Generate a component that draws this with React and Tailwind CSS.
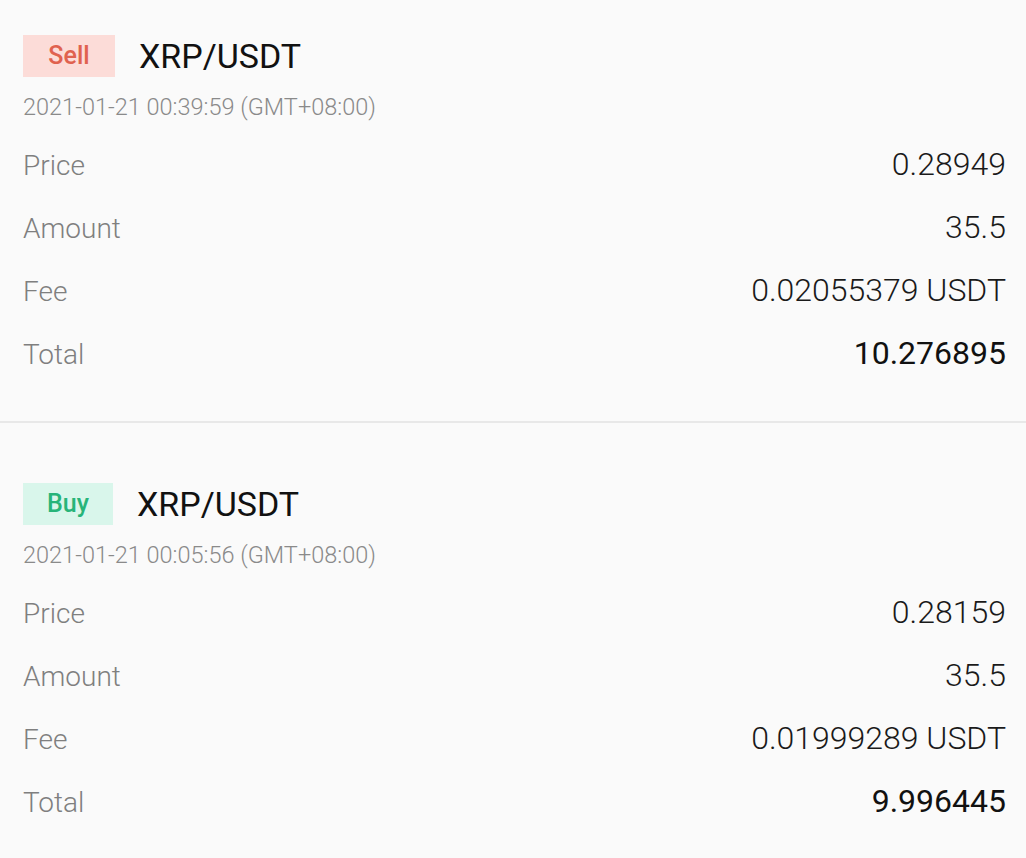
export default function App() {
  const trades = [
    {
      side: "Sell",
      pair: "XRP/USDT",
      date: "2021-01-21 00:39:59 (GMT+08:00)",
      price: "0.28949",
      amount: "35.5",
      fee: "0.02055379 USDT",
      total: "10.276895",
    },
    {
      side: "Buy",
      pair: "XRP/USDT",
      date: "2021-01-21 00:05:56 (GMT+08:00)",
      price: "0.28159",
      amount: "35.5",
      fee: "0.01999289 USDT",
      total: "9.996445",
    },
  ];
  return (
    <div
      className="w-[1026px] h-[858px] bg-[#fafafa] overflow-hidden"
      style={{ fontFamily: "Roboto, 'Noto Sans', sans-serif" }}
    >
      {trades.map((t, i) => (
        <div key={i}>
          {i > 0 && <div className="h-[2px] bg-[#e8e8e8]" />}
          <div className={`pl-[23px] pr-[20px] ${i === 0 ? "pt-[35px]" : "pt-[60px]"} pb-[35px]`}>
            <div className="flex items-center h-[42px]">
              <div
                className={`h-[42px] flex items-center justify-center text-[25px] font-medium ${
                  t.side === "Sell"
                    ? "w-[92px] bg-[#fcdcd8] text-[#e0624f]"
                    : "w-[90px] bg-[#d9f6eb] text-[#27b479]"
                }`}
              >
                {t.side}
              </div>
              <div className="ml-[24px] text-[34px] text-[#111] leading-none">{t.pair}</div>
            </div>
            <div className="mt-[15px] h-[32px] flex items-center text-[23.5px] font-light text-[#8a8a8a]">
              {t.date}
            </div>
            <div className="mt-[10px] flex flex-col">
              {[
                ["Price", t.price, false],
                ["Amount", t.amount, false],
                ["Fee", t.fee, false],
                ["Total", t.total, true],
              ].map(([label, value, bold]) => (
                <div key={label} className="h-[63px] flex items-center justify-between">
                  <span className="text-[28px] font-light text-[#7f7f7f]">{label}</span>
                  <span
                    className={`pb-[4px] text-[32px] ${
                      bold ? "font-normal text-[#111]" : "font-light text-[#1a1a1a]"
                    }`}
                  >
                    {value}
                  </span>
                </div>
              ))}
            </div>
          </div>
        </div>
      ))}
    </div>
  );
}
